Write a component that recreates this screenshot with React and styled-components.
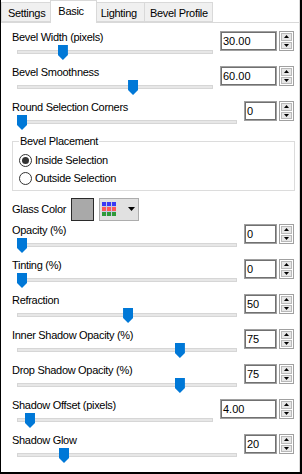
import React from 'react';
import styled, { createGlobalStyle } from 'styled-components';

const Global = createGlobalStyle`
  html, body { margin: 0; padding: 0; background: #fff; }
  body { font-family: "Liberation Sans", Arial, sans-serif; font-size: 11px; color: #000; }
  * { box-sizing: border-box; }
`;

const Window = styled.div`
  width: 302px;
  height: 474px;
  display: flex;
  flex-direction: column;
  border-left: 1px solid #000;
  border-right: 2px solid #000;
  border-bottom: 2px solid #000;
  background: #fff;
  overflow: hidden;
`;

const TabBar = styled.div`
  display: flex;
  align-items: flex-end;
  height: 23px;
  border-bottom: 1px solid #d9d9d9;
  border-right: 1px solid #d9d9d9;
`;

const Tab = styled.div`
  position: relative;
  height: ${p => (p.$active ? 23 : 20)}px;
  margin-bottom: ${p => (p.$active ? -1 : 0)}px;
  margin-left: ${p => p.$ml}px;
  padding: 3px ${p => p.$pr}px 0 ${p => p.$pl}px;
  border: 1px solid #d9d9d9;
  border-bottom: ${p => (p.$active ? 'none' : '1px solid #d9d9d9')};
  background: ${p => (p.$active ? '#fff' : '#f0f0f0')};
  z-index: ${p => (p.$active ? 2 : 1)};
  line-height: 14px;
  letter-spacing: -0.3px;
  white-space: nowrap;
`;

const Panel = styled.div`
  flex: 1;
  display: flex;
  flex-direction: column;
  padding: 7px 4px 0 11px;
  border-right: 1px solid #d9d9d9;
`;

const Row = styled.div`
  display: grid;
  grid-template-columns: 1fr auto;
  column-gap: 7px;
  height: 35px;
`;

const LeftCol = styled.div`
  display: flex;
  flex-direction: column;
  min-width: 0;
`;

const Label = styled.div`
  height: 14px;
  line-height: 14px;
  letter-spacing: -0.3px;
  white-space: nowrap;
`;

const SliderArea = styled.div`
  position: relative;
  height: 20px;
  margin-left: 5px;
`;

const Track = styled.div`
  margin-top: 6px;
  height: 4px;
  background: #e7e7e7;
  border: 1px solid #d6d6d6;
`;

const Thumb = styled.div`
  position: absolute;
  top: 1px;
  left: calc(${p => p.$pos} * (100% - 10px));
  width: 10px;
  height: 15px;
  background: #0078d7;
  clip-path: polygon(0 0, 100% 0, 100% 10px, 50% 100%, 0 10px);
`;

const Spin = styled.div`
  display: flex;
  gap: 2px;
  width: ${p => (p.$wide ? 74 : 50)}px;
  height: 20px;
  margin-top: 1px;
  margin-right: 1px;
`;

const Field = styled.div`
  flex: 1;
  border: 1px solid #a0a0a0;
  box-shadow: inset 0 0 0 1px #707070;
  padding-left: 2px;
  line-height: 18px;
  white-space: nowrap;
`;

const Arrows = styled.div`
  width: 15px;
  display: flex;
  flex-direction: column;
  gap: 1px;
  border: 1px solid #a0a0a0;
  padding: 1px;
`;

const ArrowBtn = styled.div`
  flex: 1;
  background: #e6e6e6;
  border: 1px solid #b9b9b9;
  display: flex;
  align-items: center;
  justify-content: center;
`;

const Tri = ({ up }) => (
  <svg width="5" height="3" viewBox="0 0 5 3">
    <polygon points={up ? '2.5,0 5,3 0,3' : '0,0 5,0 2.5,3'} fill="#000" />
  </svg>
);

const SpinBox = ({ value, wide }) => (
  <Spin $wide={wide}>
    <Field>{value}</Field>
    <Arrows>
      <ArrowBtn><Tri up /></ArrowBtn>
      <ArrowBtn><Tri /></ArrowBtn>
    </Arrows>
  </Spin>
);

const SliderRow = ({ label, value, wide, pos }) => (
  <Row>
    <LeftCol>
      <Label>{label}</Label>
      <SliderArea>
        <Track />
        <Thumb $pos={pos} />
      </SliderArea>
    </LeftCol>
    <SpinBox value={value} wide={wide} />
  </Row>
);

const Group = styled.div`
  position: relative;
  margin-top: 6px;
  margin-right: 0;
  height: 50px;
  border: 1px solid #dcdcdc;
  padding: 9px 0 0 6px;
`;

const Legend = styled.span`
  position: absolute;
  top: -8px;
  left: 6px;
  padding: 0 1px;
  background: #fff;
  line-height: 14px;
  letter-spacing: -0.3px;
`;

const RadioRow = styled.div`
  display: flex;
  align-items: center;
  height: 18px;
  gap: 3px;
  letter-spacing: -0.3px;
`;

const RadioCircle = styled.span`
  width: 13px;
  height: 13px;
  border-radius: 50%;
  border: 1px solid #333;
  display: flex;
  align-items: center;
  justify-content: center;
  &::after {
    content: '';
    width: 7px;
    height: 7px;
    border-radius: 50%;
    background: ${p => (p.$checked ? '#333' : 'transparent')};
  }
`;

const ColorRow = styled.div`
  display: flex;
  align-items: center;
  height: 32px;
  padding-top: 4px;
`;

const ColorLabel = styled.div`
  width: 59px;
  letter-spacing: -0.3px;
  white-space: nowrap;
`;

const Swatch = styled.div`
  width: 23px;
  height: 23px;
  border: 1px solid #2a2a2a;
  background: #a9a9a9;
`;

const PaletteButton = styled.div`
  margin-left: 5px;
  width: 40px;
  height: 23px;
  background: #e1e1e1;
  border: 1px solid #adadad;
  display: flex;
  align-items: center;
  padding-left: 2px;
  gap: 12px;
`;

const PaletteIcon = () => {
  const colors = ['#3a3af5', '#ff5858', '#2f9a3a'];
  return (
    <svg width="14" height="14" viewBox="0 0 14 14">
      <rect x="0" y="0" width="14" height="14" fill="#c8c8e0" />
      {colors.map((c, r) =>
        [0, 1, 2].map(col => (
          <rect key={`${r}-${col}`} x={col * 5} y={r * 5} width="4" height="4" fill={c} />
        ))
      )}
    </svg>
  );
};

const DropTri = () => (
  <svg width="7" height="4" viewBox="0 0 7 4">
    <polygon points="0,0 7,0 3.5,4" fill="#000" />
  </svg>
);

export default function App() {
  return (
    <>
      <Global />
      <Window>
        <TabBar>
          <Tab $ml={0} $pl={6} $pr={6}>Settings</Tab>
          <Tab $active $ml={-2} $pl={7} $pr={12}>Basic</Tab>
          <Tab $ml={-2} $pl={5} $pr={7}>Lighting</Tab>
          <Tab $ml={-1} $pl={5} $pr={4}>Bevel Profile</Tab>
        </TabBar>
        <Panel>
          <SliderRow label="Bevel Width (pixels)" value="30.00" wide pos={0.22} />
          <SliderRow label="Bevel Smoothness" value="60.00" wide pos={0.597} />
          <SliderRow label="Round Selection Corners" value="0" pos={0} />
          <Group>
            <Legend>Bevel Placement</Legend>
            <RadioRow>
              <RadioCircle $checked />
              Inside Selection
            </RadioRow>
            <RadioRow>
              <RadioCircle />
              Outside Selection
            </RadioRow>
          </Group>
          <ColorRow>
            <ColorLabel>Glass Color</ColorLabel>
            <Swatch />
            <PaletteButton>
              <PaletteIcon />
              <DropTri />
            </PaletteButton>
          </ColorRow>
          <SliderRow label="Opacity (%)" value="0" pos={0} />
          <SliderRow label="Tinting (%)" value="0" pos={0} />
          <SliderRow label="Refraction" value="50" pos={0.505} />
          <SliderRow label="Inner Shadow Opacity (%)" value="75" pos={0.752} />
          <SliderRow label="Drop Shadow Opacity (%)" value="75" pos={0.752} />
          <SliderRow label="Shadow Offset (pixels)" value="4.00" wide pos={0.043} />
          <SliderRow label="Shadow Glow" value="20" pos={0.2} />
        </Panel>
      </Window>
    </>
  );
}
